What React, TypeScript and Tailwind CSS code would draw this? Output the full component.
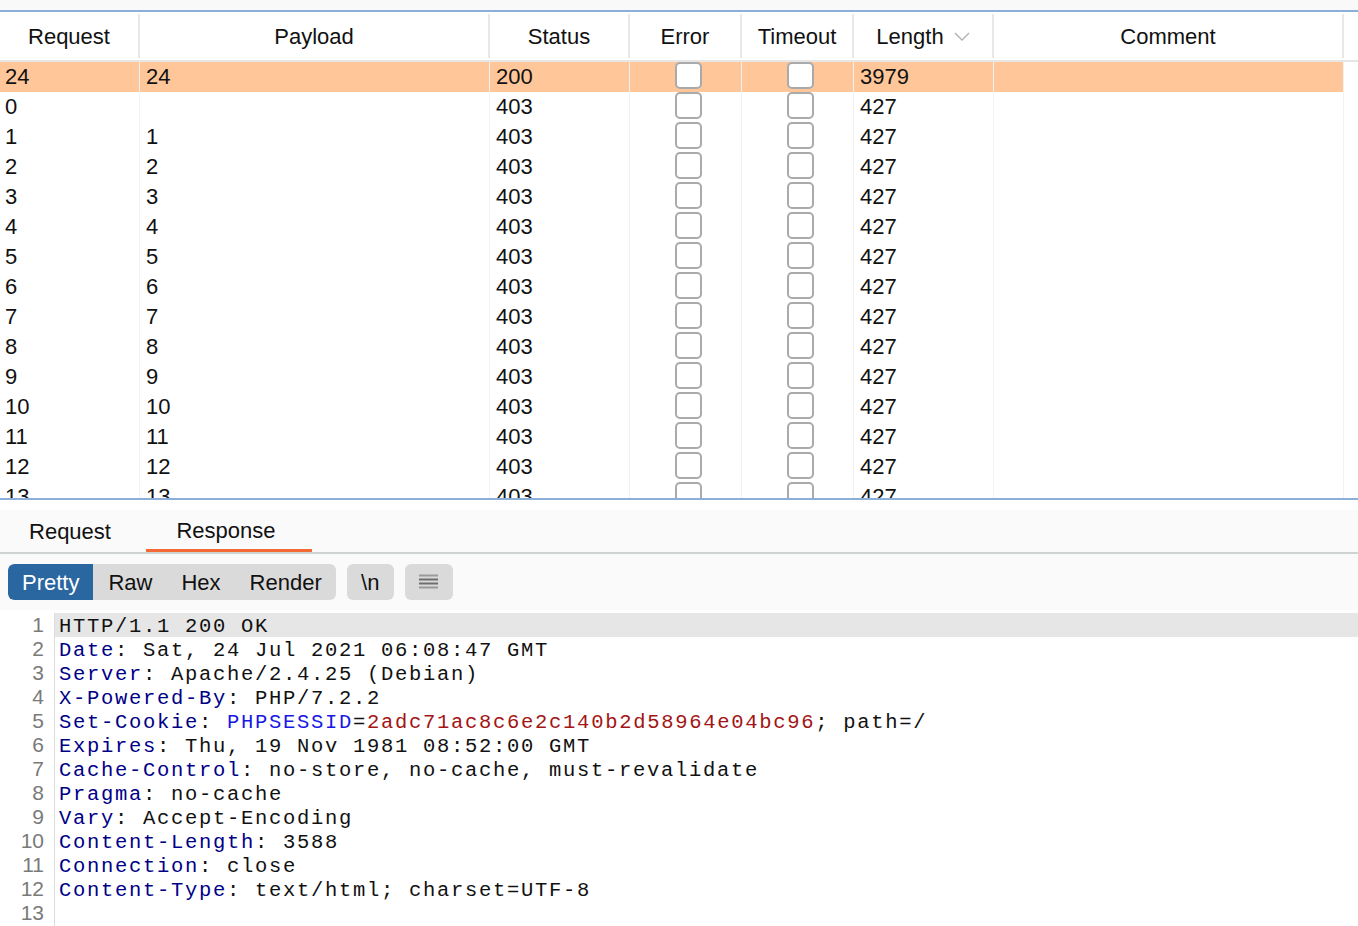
import React from "react";

const cols = [
  { name: "Request", w: "w-[140px]" },
  { name: "Payload", w: "w-[350px]" },
  { name: "Status", w: "w-[140px]" },
  { name: "Error", w: "w-[112px]" },
  { name: "Timeout", w: "w-[112px]" },
  { name: "Length", w: "w-[140px]" },
  { name: "Comment", w: "w-[350px]" },
];

type Row = { req: string; payload: string; status: string; len: string; hl?: boolean };

const rows: Row[] = [
  { req: "24", payload: "24", status: "200", len: "3979", hl: true },
  { req: "0", payload: "", status: "403", len: "427" },
  ...Array.from({ length: 13 }, (_, i) => ({
    req: String(i + 1),
    payload: String(i + 1),
    status: "403",
    len: "427",
  })),
];

function Checkbox() {
  return <div className="w-[27px] h-[27px] rounded-[5px] border-2 border-[#aaaaaa] bg-white" />;
}

const N = "text-[#000087]";
const R = "text-[#a31515]";
const B = "text-[#1717e6]";

const code: React.ReactNode[] = [
  <>HTTP/1.1 200 OK</>,
  <><span className={N}>Date</span>: Sat, 24 Jul 2021 06:08:47 GMT</>,
  <><span className={N}>Server</span>: Apache/2.4.25 (Debian)</>,
  <><span className={N}>X-Powered-By</span>: PHP/7.2.2</>,
  <>
    <span className={N}>Set-Cookie</span>: <span className={B}>PHPSESSID</span>=
    <span className={R}>2adc71ac8c6e2c140b2d58964e04bc96</span>; path=/
  </>,
  <><span className={N}>Expires</span>: Thu, 19 Nov 1981 08:52:00 GMT</>,
  <><span className={N}>Cache-Control</span>: no-store, no-cache, must-revalidate</>,
  <><span className={N}>Pragma</span>: no-cache</>,
  <><span className={N}>Vary</span>: Accept-Encoding</>,
  <><span className={N}>Content-Length</span>: 3588</>,
  <><span className={N}>Connection</span>: close</>,
  <><span className={N}>Content-Type</span>: text/html; charset=UTF-8</>,
  <></>,
];

export default function App() {
  return (
    <div className="w-[1358px] h-[926px] overflow-hidden bg-white text-[#111] font-['Liberation_Sans',Arial,sans-serif] text-[22px]">
      <div className="h-[10px] bg-[#f9f9f9]" />
      <div className="h-[2px] bg-[#8aafd9]" />
      {/* table */}
      <div className="h-[486px] overflow-hidden flex flex-col">
        <div className="h-[48px] flex py-[2px] bg-white shrink-0">
          {cols.map((c) => (
            <div
              key={c.name}
              className={`${c.w} shrink-0 flex items-center justify-center border-r-2 border-[#e8e8e8] gap-[10px]`}
            >
              <span>{c.name}</span>
              {c.name === "Length" && (
                <svg width="16" height="10" viewBox="0 0 16 10" className="mt-[2px]">
                  <polyline points="1,1 8,8 15,1" fill="none" stroke="#b0b0b0" strokeWidth="1.4" />
                </svg>
              )}
            </div>
          ))}
          <div className="flex-1" />
        </div>
        <div className="h-[2px] bg-[#e6e6e6] shrink-0" />
        {rows.map((r, i) => (
          <div key={i} className="h-[30px] flex shrink-0 leading-[30px]">
            <div className={`flex ${r.hl ? "bg-[#ffc799]" : ""}`}>
              <div className="w-[140px] pl-[5px] border-r border-[#f2f2f2]">{r.req}</div>
              <div className="w-[350px] pl-[6px] border-r border-[#f2f2f2]">{r.payload}</div>
              <div className="w-[140px] pl-[6px] border-r border-[#f2f2f2]">{r.status}</div>
              <div className="w-[112px] flex justify-center pl-[5px] border-r border-[#f2f2f2]">
                <Checkbox />
              </div>
              <div className="w-[112px] flex justify-center pl-[5px] border-r border-[#f2f2f2]">
                <Checkbox />
              </div>
              <div className="w-[140px] pl-[6px] border-r border-[#f2f2f2]">{r.len}</div>
              <div className="w-[350px] border-r border-[#f2f2f2]" />
            </div>
            <div className="flex-1" />
          </div>
        ))}
      </div>
      <div className="h-[2px] bg-[#8aafd9]" />
      {/* tabs */}
      <div className="h-[10px] bg-white" />
      <div className="h-[42px] bg-[#fafafa] flex">
        <div className="w-[140px] flex items-center justify-center">Request</div>
        <div className="w-[6px]" />
        <div className="w-[166px] flex flex-col">
          <div className="flex-1 flex items-center justify-center pt-[2px] pr-[6px]">Response</div>
          <div className="h-[3px] bg-[#f36a35]" />
        </div>
      </div>
      <div className="h-[2px] bg-[#d0d4d0]" />
      {/* toolbar */}
      <div className="h-[56px] bg-[#fafafa] flex items-start pt-[10px] pl-[8px] gap-[11px]">
        <div className="h-[36px] flex rounded-[6px] bg-[#dadada] overflow-hidden">
          <div className="px-[14px] flex items-center bg-[#2a66a0] text-white rounded-[6px] rounded-r-none">Pretty</div>
          <div className="pl-[15px] pr-[14px] flex items-center">Raw</div>
          <div className="pl-[15px] pr-[14px] flex items-center">Hex</div>
          <div className="pl-[15px] pr-[14px] flex items-center">Render</div>
        </div>
        <div className="h-[36px] w-[47px] flex items-center justify-center rounded-[6px] bg-[#dadada]">\n</div>
        <div className="h-[36px] w-[48px] flex items-center justify-center rounded-[6px] bg-[#dadada]">
          <svg width="20" height="16" viewBox="0 0 20 16">
            <rect x="0" y="0.5" width="19" height="2" fill="#9a9a9a" />
            <rect x="0" y="4.5" width="19" height="2" fill="#6e6e6e" />
            <rect x="0" y="8.5" width="19" height="2" fill="#6e6e6e" />
            <rect x="0" y="12.5" width="19" height="2" fill="#9a9a9a" />
          </svg>
        </div>
      </div>
      <div className="h-[3px] bg-white" />
      {/* code */}
      <div className="flex">
        <div className="w-[55px] border-r border-[#dddddd] pr-[10px] text-right text-[#7a7a7a] text-[21px] h-[320px]">
          {code.map((_, i) => (
            <div key={i} className="h-[24px] leading-[24px]">
              {i + 1}
            </div>
          ))}
        </div>
        <div className="flex-1 font-['Liberation_Mono','Courier_New',monospace] text-[20.5px] tracking-[1.7px] whitespace-pre">
          {code.map((c, i) => (
            <div key={i} className={`h-[24px] leading-[27px] pl-[4px] ${i === 0 ? "bg-[#e6e6e6]" : ""}`}>
              {c}
            </div>
          ))}
        </div>
      </div>
    </div>
  );
}
